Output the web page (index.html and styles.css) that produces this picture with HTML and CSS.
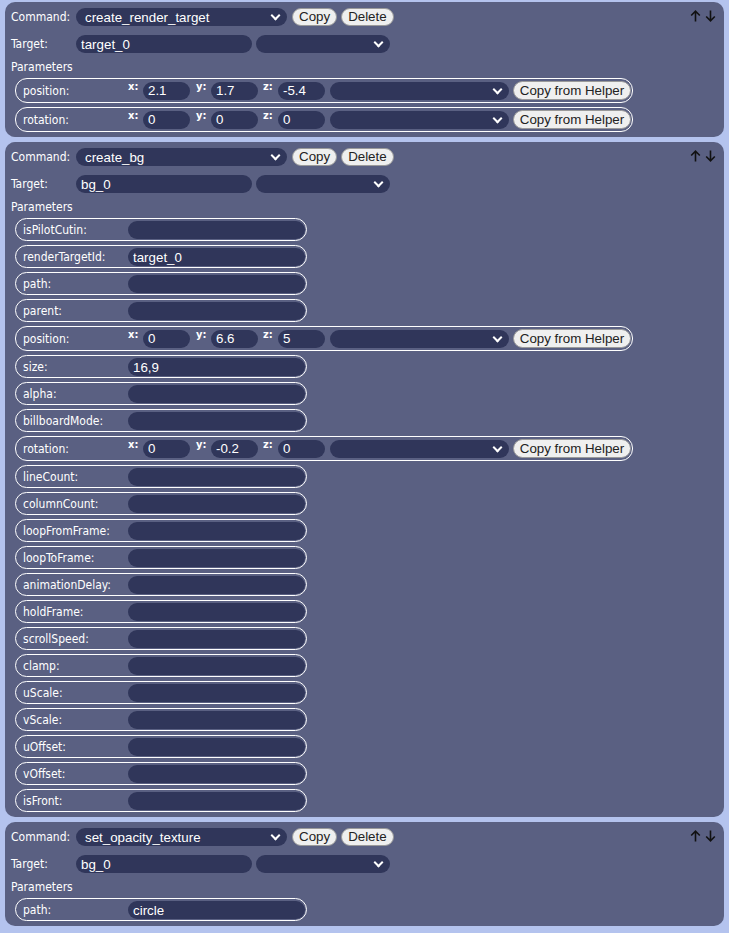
FILE: index.html
```html
<!DOCTYPE html>
<html>
<head>
<meta charset="utf-8">
<link rel="stylesheet" href="styles.css">
</head>
<body>
<div class="list">

  <section class="card">
    <div class="head">
      <span class="lbl">Command:</span>
      <span class="sel w-cmd"><select><option>create_render_target</option></select></span>
      <button class="btn">Copy</button>
      <button class="btn">Delete</button>
      <span class="moves">
        <svg width="11" height="12" viewBox="0 0 11 12"><path d="M5.5 11.5V1.2M1.2 5.5L5.5 1.2L9.8 5.5" fill="none" stroke="#111" stroke-width="1.6"/></svg>
        <svg width="11" height="12" viewBox="0 0 11 12"><path d="M5.5 0.5V10.8M1.2 6.5L5.5 10.8L9.8 6.5" fill="none" stroke="#111" stroke-width="1.6"/></svg>
      </span>
    </div>
    <div class="target">
      <span class="lbl">Target:</span>
      <input class="inp w-tgt" value="target_0">
      <span class="sel w-tsel"><select><option></option></select></span>
    </div>
    <div class="ph">Parameters</div>
    <div class="params">
      <div class="row vec">
        <span class="plbl">position:</span>
        <span class="ax">x:</span><input class="inp w-num" value="2.1">
        <span class="ax ax-gap">y:</span><input class="inp w-num" value="1.7">
        <span class="ax ax-gap2">z:</span><input class="inp w-num" value="-5.4">
        <span class="sel w-vsel"><select><option></option></select></span>
        <button class="btn helper">Copy from Helper</button>
      </div>
      <div class="row vec">
        <span class="plbl">rotation:</span>
        <span class="ax">x:</span><input class="inp w-num" value="0">
        <span class="ax ax-gap">y:</span><input class="inp w-num" value="0">
        <span class="ax ax-gap2">z:</span><input class="inp w-num" value="0">
        <span class="sel w-vsel"><select><option></option></select></span>
        <button class="btn helper">Copy from Helper</button>
      </div>
    </div>
  </section>

  <section class="card">
    <div class="head">
      <span class="lbl">Command:</span>
      <span class="sel w-cmd"><select><option>create_bg</option></select></span>
      <button class="btn">Copy</button>
      <button class="btn">Delete</button>
      <span class="moves">
        <svg width="11" height="12" viewBox="0 0 11 12"><path d="M5.5 11.5V1.2M1.2 5.5L5.5 1.2L9.8 5.5" fill="none" stroke="#111" stroke-width="1.6"/></svg>
        <svg width="11" height="12" viewBox="0 0 11 12"><path d="M5.5 0.5V10.8M1.2 6.5L5.5 10.8L9.8 6.5" fill="none" stroke="#111" stroke-width="1.6"/></svg>
      </span>
    </div>
    <div class="target">
      <span class="lbl">Target:</span>
      <input class="inp w-tgt" value="bg_0">
      <span class="sel w-tsel"><select><option></option></select></span>
    </div>
    <div class="ph">Parameters</div>
    <div class="params">
      <div class="row"><span class="plbl">isPilotCutin:</span><input class="inp w-val" value=""></div>
      <div class="row"><span class="plbl">renderTargetId:</span><input class="inp w-val" value="target_0"></div>
      <div class="row"><span class="plbl">path:</span><input class="inp w-val" value=""></div>
      <div class="row"><span class="plbl">parent:</span><input class="inp w-val" value=""></div>
      <div class="row vec">
        <span class="plbl">position:</span>
        <span class="ax">x:</span><input class="inp w-num" value="0">
        <span class="ax ax-gap">y:</span><input class="inp w-num" value="6.6">
        <span class="ax ax-gap2">z:</span><input class="inp w-num" value="5">
        <span class="sel w-vsel"><select><option></option></select></span>
        <button class="btn helper">Copy from Helper</button>
      </div>
      <div class="row"><span class="plbl">size:</span><input class="inp w-val" value="16,9"></div>
      <div class="row"><span class="plbl">alpha:</span><input class="inp w-val" value=""></div>
      <div class="row"><span class="plbl">billboardMode:</span><input class="inp w-val" value=""></div>
      <div class="row vec">
        <span class="plbl">rotation:</span>
        <span class="ax">x:</span><input class="inp w-num" value="0">
        <span class="ax ax-gap">y:</span><input class="inp w-num" value="-0.2">
        <span class="ax ax-gap2">z:</span><input class="inp w-num" value="0">
        <span class="sel w-vsel"><select><option></option></select></span>
        <button class="btn helper">Copy from Helper</button>
      </div>
      <div class="row"><span class="plbl">lineCount:</span><input class="inp w-val" value=""></div>
      <div class="row"><span class="plbl">columnCount:</span><input class="inp w-val" value=""></div>
      <div class="row"><span class="plbl">loopFromFrame:</span><input class="inp w-val" value=""></div>
      <div class="row"><span class="plbl">loopToFrame:</span><input class="inp w-val" value=""></div>
      <div class="row"><span class="plbl">animationDelay:</span><input class="inp w-val" value=""></div>
      <div class="row"><span class="plbl">holdFrame:</span><input class="inp w-val" value=""></div>
      <div class="row"><span class="plbl">scrollSpeed:</span><input class="inp w-val" value=""></div>
      <div class="row"><span class="plbl">clamp:</span><input class="inp w-val" value=""></div>
      <div class="row"><span class="plbl">uScale:</span><input class="inp w-val" value=""></div>
      <div class="row"><span class="plbl">vScale:</span><input class="inp w-val" value=""></div>
      <div class="row"><span class="plbl">uOffset:</span><input class="inp w-val" value=""></div>
      <div class="row"><span class="plbl">vOffset:</span><input class="inp w-val" value=""></div>
      <div class="row"><span class="plbl">isFront:</span><input class="inp w-val" value=""></div>
    </div>
  </section>

  <section class="card">
    <div class="head">
      <span class="lbl">Command:</span>
      <span class="sel w-cmd"><select><option>set_opacity_texture</option></select></span>
      <button class="btn">Copy</button>
      <button class="btn">Delete</button>
      <span class="moves">
        <svg width="11" height="12" viewBox="0 0 11 12"><path d="M5.5 11.5V1.2M1.2 5.5L5.5 1.2L9.8 5.5" fill="none" stroke="#111" stroke-width="1.6"/></svg>
        <svg width="11" height="12" viewBox="0 0 11 12"><path d="M5.5 0.5V10.8M1.2 6.5L5.5 10.8L9.8 6.5" fill="none" stroke="#111" stroke-width="1.6"/></svg>
      </span>
    </div>
    <div class="target">
      <span class="lbl">Target:</span>
      <input class="inp w-tgt" value="bg_0">
      <span class="sel w-tsel"><select><option></option></select></span>
    </div>
    <div class="ph">Parameters</div>
    <div class="params">
      <div class="row"><span class="plbl">path:</span><input class="inp w-val" value="circle"></div>
    </div>
  </section>

</div>
</body>
</html>
```

FILE: styles.css
```css
html, body {
  margin: 0;
  padding: 0;
  background: #b4c3ee;
}
body {
  padding: 2px 5px;
  font-family: "DejaVu Sans Condensed", "DejaVu Sans", sans-serif;
  font-size: 12px;
  color: #fff;
}
.list {
  display: flex;
  flex-direction: column;
  gap: 5px;
}
.card {
  background: #5a6082;
  border-radius: 10px;
  padding: 6px 8px 5px 6px;
}
.head, .target {
  display: flex;
  align-items: center;
  height: 18px;
}
.target {
  margin-top: 9px;
}
.lbl {
  width: 65px;
  flex: none;
  line-height: 14px;
}
.inp, .sel select {
  box-sizing: border-box;
  height: 18px;
  border: none;
  outline: none;
  border-radius: 9px;
  background: #30365a;
  color: #fff;
  font-family: "Liberation Sans", Arial, sans-serif;
  font-size: 13.333px;
  padding: 0 5px;
  margin: 0;
  flex: none;
}
.sel {
  position: relative;
  display: inline-flex;
  flex: none;
}
.sel select {
  -webkit-appearance: none;
  appearance: none;
  width: 100%;
  padding: 0 20px 0 9px;
}
.sel::after {
  content: "";
  position: absolute;
  right: 8px;
  top: 4px;
  width: 5px;
  height: 5px;
  border-right: 2px solid #fff;
  border-bottom: 2px solid #fff;
  transform: rotate(45deg);
  pointer-events: none;
}
.w-cmd { width: 211px; }
.w-tgt { width: 176px; }
.w-tsel { width: 134px; margin-left: 4px; }
.w-vsel { width: 179px; margin-left: 5px; }
.w-num { width: 47px; }
.w-val { width: 177px; }

.btn {
  box-sizing: border-box;
  height: 18px;
  padding: 0 6px;
  margin: 0;
  border: 1px solid #9a9a9a;
  border-radius: 9px;
  background: #efefef;
  color: #222;
  font-family: "Liberation Sans", Arial, sans-serif;
  font-size: 13.333px;
  line-height: 16px;
  white-space: nowrap;
  flex: none;
}
.head .btn:first-of-type { margin-left: 5px; }
.head .btn + .btn { margin-left: 4px; }
.helper {
  margin-left: 4px;
  height: 19px;
  border-radius: 10px;
  width: 118px;
  padding: 0;
}
.moves {
  margin-left: auto;
  display: flex;
  gap: 4px;
  align-items: center;
  margin-top: -3px;
}
.moves svg { display: block; }

.ph {
  margin: 7px 0 4px;
  line-height: 14px;
}
.params {
  margin-left: 4px;
  display: flex;
  flex-direction: column;
  align-items: flex-start;
  gap: 4px;
}
.row {
  display: flex;
  align-items: center;
  border: 1px solid #fff;
  border-radius: 12px;
  padding: 2px 1px 1px 7px;
}
.row.vec {
  padding: 2px 1px 2px 7px;
}
.plbl {
  width: 105px;
  flex: none;
  line-height: 14px;
}
.ax {
  width: 15px;
  flex: none;
  align-self: flex-start;
  font-weight: bold;
  font-size: 11px;
  line-height: 12px;
}
.ax-gap { margin-left: 6px; }
.ax-gap2 { margin-left: 5px; }
```
